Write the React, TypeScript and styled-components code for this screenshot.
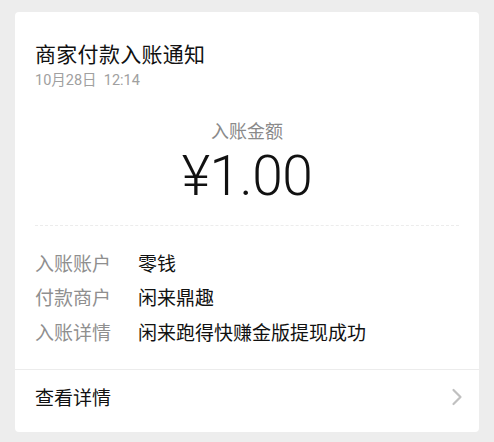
import React from "react";
import styled, { createGlobalStyle } from "styled-components";

const Global = createGlobalStyle`
  html, body { margin: 0; padding: 0; background: #ededed; }
  body { font-family: "Noto Sans CJK SC", "Noto Sans", sans-serif; }
`;

const Page = styled.div`
  padding: 12px 15px 10px;
`;

const Card = styled.div`
  width: 464px;
  height: 420px;
  background: #ffffff;
  border-radius: 4px;
  display: flex;
  flex-direction: column;
  box-sizing: border-box;
  padding-top: 27px;
`;

const Header = styled.div`
  padding: 0 20px;
  display: flex;
  flex-direction: column;
`;

const Title = styled.div`
  font-size: 21px;
  line-height: 28px;
  color: #111;
  letter-spacing: 0.3px;
`;

const Time = styled.div`
  margin-top: 4px;
  font-family: Roboto, "Noto Sans CJK SC", sans-serif;
  font-size: 14.5px;
  line-height: 20px;
  color: #a0a0a0;
`;

const AmountBlock = styled.div`
  display: flex;
  flex-direction: column;
  align-items: center;
  margin-top: 27px;
`;

const AmountLabel = styled.div`
  font-size: 18px;
  line-height: 24px;
  color: #8a8a8a;
`;

const Amount = styled.div`
  margin-top: 7px;
  font-family: Roboto, "Noto Sans", sans-serif;
  font-size: 55px;
  line-height: 54px;
  color: #111;
  font-weight: 300;
  letter-spacing: -0.5px;
`;

const Dotted = styled.div`
  margin: 22px 20px 0;
  border-top: 1px dashed #ececec;
`;

const Rows = styled.div`
  margin-top: 19px;
  padding: 0 20px;
  display: flex;
  flex-direction: column;
`;

const Row = styled.div`
  display: flex;
  align-items: center;
  height: 34.5px;
  font-size: 19px;
`;

const Label = styled.span`
  width: 103px;
  color: #8f8f8f;
  flex-shrink: 0;
`;

const Value = styled.span`
  color: #111;
`;

const Divider = styled.div`
  margin-top: 20px;
  border-top: 1px solid #ececec;
`;

const Footer = styled.div`
  flex: 1;
  display: flex;
  align-items: center;
  justify-content: space-between;
  padding: 0 16px 8px 20px;
  font-size: 19px;
  color: #111;
`;

const Chevron = () => (
  <svg width="12" height="18" viewBox="0 0 12 18" fill="none">
    <path d="M2.5 2 L9.5 9 L2.5 16" stroke="#c0c0c0" strokeWidth="2.2" strokeLinecap="round" strokeLinejoin="round" />
  </svg>
);

export default function App() {
  return (
    <>
      <Global />
      <Page>
        <Card>
          <Header>
            <Title>商家付款入账通知</Title>
            <Time>10月28日&nbsp;&nbsp;12:14</Time>
          </Header>
          <AmountBlock>
            <AmountLabel>入账金额</AmountLabel>
            <Amount>¥1.00</Amount>
          </AmountBlock>
          <Dotted />
          <Rows>
            <Row><Label>入账账户</Label><Value>零钱</Value></Row>
            <Row><Label>付款商户</Label><Value>闲来鼎趣</Value></Row>
            <Row><Label>入账详情</Label><Value>闲来跑得快赚金版提现成功</Value></Row>
          </Rows>
          <Divider />
          <Footer>
            <span>查看详情</span>
            <Chevron />
          </Footer>
        </Card>
      </Page>
    </>
  );
}
